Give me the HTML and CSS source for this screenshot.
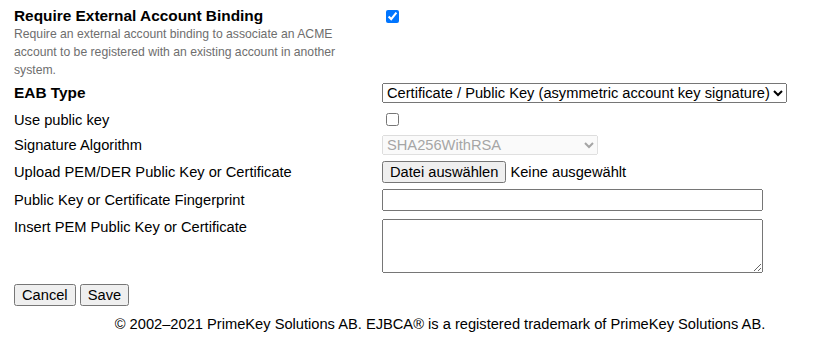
FILE: index.html
```html
<!DOCTYPE html>
<html lang="en">
<head>
    <meta charset="UTF-8">
    <title>ACME Alias</title>
    <link rel="stylesheet" href="styles.css">
</head>
<body>
    <form class="edit-form">
        <table class="edit-table">
            <tr class="row-first">
                <td class="label-cell">
                    <div class="section-title">Require External Account Binding</div>
                    <div class="help-text">Require an external account binding to associate an ACME account to be registered with an existing account in another system.</div>
                </td>
                <td class="value-cell top"><input type="checkbox" checked></td>
            </tr>
            <tr>
                <td class="label-cell"><span class="section-title">EAB Type</span></td>
                <td class="value-cell">
                    <select class="eab-select">
                        <option>Certificate / Public Key (asymmetric account key signature)</option>
                    </select>
                </td>
            </tr>
            <tr class="row-use">
                <td class="label-cell">Use public key</td>
                <td class="value-cell"><input type="checkbox"></td>
            </tr>
            <tr>
                <td class="label-cell">Signature Algorithm</td>
                <td class="value-cell">
                    <select class="algo-select" disabled>
                        <option>SHA256WithRSA</option>
                    </select>
                </td>
            </tr>
            <tr>
                <td class="label-cell">Upload PEM/DER Public Key or Certificate</td>
                <td class="value-cell">
                    <button type="button" class="file-btn">Datei auswählen</button> Keine ausgewählt
                </td>
            </tr>
            <tr>
                <td class="label-cell">Public Key or Certificate Fingerprint</td>
                <td class="value-cell"><input type="text" class="text-input"></td>
            </tr>
            <tr class="row-pem">
                <td class="label-cell top">Insert PEM Public Key or Certificate</td>
                <td class="value-cell"><textarea class="pem-area"></textarea></td>
            </tr>
        </table>
        <div class="actions">
            <button type="button">Cancel</button>
            <button type="button">Save</button>
        </div>
    </form>
    <div class="footer">© 2002–2021 PrimeKey Solutions AB. EJBCA® is a registered trademark of PrimeKey Solutions AB.</div>
</body>
</html>
```
FILE: styles.css
```css
body {
    font-family: "Liberation Sans", Arial, sans-serif;
    font-size: 14.67px;
    color: #000;
    margin: 0;
    padding: 4px 12px 0 12px;
}

.edit-table {
    border-collapse: separate;
    border-spacing: 2px 0;
}

.label-cell {
    width: 366px;
    padding: 3px 0;
    vertical-align: middle;
}

.value-cell {
    padding: 3px 0;
    vertical-align: middle;
}

.top {
    vertical-align: top;
}

.row-first td {
    padding-bottom: 1px;
}

.row-use td {
    padding-top: 4px;
}

.row-pem td {
    padding-top: 5px;
}

.section-title {
    font-weight: bold;
    font-size: 15.4px;
}

.help-text {
    color: #6e6e6e;
    font-size: 12.2px;
    line-height: 18px;
    width: 340px;
}

input[type="checkbox"] {
    margin: 3px 3px 3px 4px;
}

.eab-select {
    font-family: inherit;
    font-size: 14.67px;
}

.algo-select {
    font-family: inherit;
    font-size: 14.67px;
    width: 216px;
}

.file-btn {
    font-family: inherit;
    font-size: 14.67px;
}

.text-input {
    width: 373px;
    height: 16px;
}

.pem-area {
    width: 375px;
    height: 48px;
    resize: both;
}

.actions {
    margin: 5px 0 0 2px;
}

.actions button {
    font-family: inherit;
    font-size: 14.67px;
    padding: 1px 6px;
}

.footer {
    text-align: center;
    margin-top: 10px;
    padding-left: 55px;
}
```
